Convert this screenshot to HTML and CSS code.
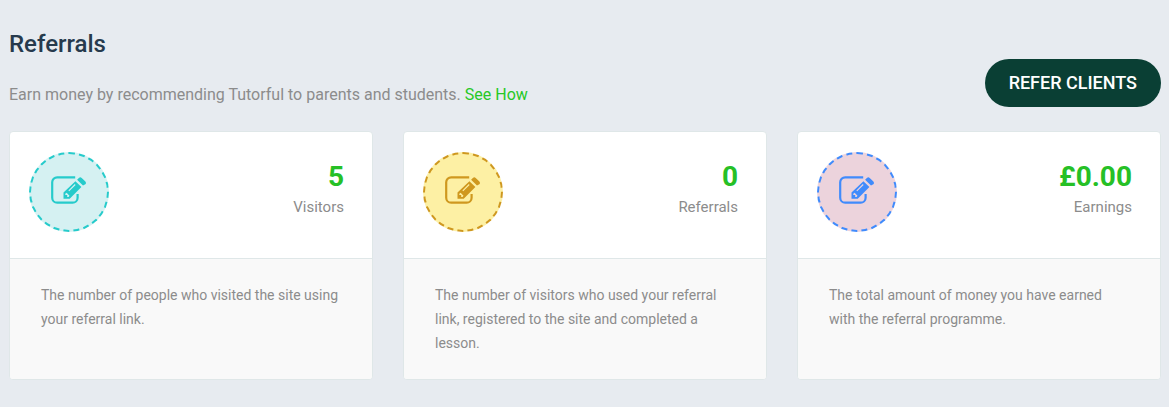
FILE: index.html
```html
<!DOCTYPE html>
<html lang="en">
<head>
    <meta charset="UTF-8">
    <meta name="viewport" content="width=device-width, initial-scale=1.0">
    <title>Referrals</title>
    <link rel="stylesheet" href="styles.css">
</head>
<body>
    <svg class="sprite" aria-hidden="true">
        <symbol id="edit" viewBox="0 0 36 32">
            <path d="M24.2 1.3H6.2a5 5 0 0 0-5 5v15.4a5 5 0 0 0 5 5h15.4a5 5 0 0 0 5-5V18" fill="none" stroke="currentColor" stroke-width="2.2"/>
            <path fill="currentColor" fill-rule="evenodd" d="M24.4 5.2l6 5.8-11.7 11.7h-6.2v-6.2zM14.3 17.7v1.4h1.9V21h1.4l.9-1.3-2.9-2.9zM17.4 14.5l.8.8 6.4-6.4-.8-.8z"/>
            <path fill="currentColor" d="M26.1 3.7l1.8-1.8a2 2 0 0 1 2.8 0l3.7 3.5a2 2 0 0 1 0 2.8l-2.4 1.4z"/>
        </symbol>
    </svg>
    <div class="page">
        <div class="header">
            <div class="intro">
                <h1>Referrals</h1>
                <p>Earn money by recommending Tutorful to parents and students. <a href="#">See How</a></p>
            </div>
            <button type="button" class="btn">REFER CLIENTS</button>
        </div>
        <div class="cards">
            <div class="card">
                <div class="top">
                    <div class="icon teal"><svg aria-hidden="true"><use href="#edit"/></svg></div>
                    <div class="stat">
                        <strong>5</strong>
                        <span>Visitors</span>
                    </div>
                </div>
                <p class="desc">The number of people who visited the site using your referral link.</p>
            </div>
            <div class="card">
                <div class="top">
                    <div class="icon yellow"><svg aria-hidden="true"><use href="#edit"/></svg></div>
                    <div class="stat">
                        <strong>0</strong>
                        <span>Referrals</span>
                    </div>
                </div>
                <p class="desc">The number of visitors who used your referral link, registered to the site and completed a lesson.</p>
            </div>
            <div class="card">
                <div class="top">
                    <div class="icon pink"><svg aria-hidden="true"><use href="#edit"/></svg></div>
                    <div class="stat">
                        <strong>£0.00</strong>
                        <span>Earnings</span>
                    </div>
                </div>
                <p class="desc">The total amount of money you have earned with the referral programme.</p>
            </div>
        </div>
    </div>
</body>
</html>
```
FILE: styles.css
```css
*{
    box-sizing: border-box;
}
body,h1,p{
    margin: 0;
}
body{
    background: #e7ebf0;
    color: #8c8c8c;
    font-family: Roboto, sans-serif;
    font-size: 16px;
    line-height: 24px;
}
.sprite{
    display: none;
}
.page{
    padding: 28px 8px 28px 9px;
}
.header{
    display: flex;
    justify-content: space-between;
    align-items: flex-end;
    margin-bottom: 24px;
}
h1{
    color: #263a4d;
    font-size: 24px;
    font-weight: 500;
    line-height: 32px;
    margin-bottom: 23px;
}
a{
    color: #26c826;
    text-decoration: none;
}
.btn{
    padding: 12px 24px;
    border: 0;
    border-radius: 24px;
    background: #0a3f34;
    color: #fff;
    font-family: inherit;
    font-size: 18px;
    font-weight: 500;
    line-height: 24px;
    cursor: pointer;
}
.cards{
    display: grid;
    grid-template-columns: repeat(3, 1fr);
    gap: 30px;
}
.card{
    display: flex;
    flex-direction: column;
    border: 1px solid #dfe7e8;
    border-radius: 4px;
    background: #fff;
    overflow: hidden;
}
.top{
    display: flex;
    justify-content: space-between;
    padding: 20px 28px 26px 19px;
    border-bottom: 1px solid #dfe7e8;
}
.icon{
    display: flex;
    align-items: center;
    justify-content: center;
    width: 80px;
    height: 80px;
    border: 2px dashed;
    border-radius: 50%;
}
.icon svg{
    width: 36px;
    height: 32px;
}
.teal{
    color: #26cbcb;
    background: #d5f1f2;
}
.yellow{
    color: #cf981f;
    background: #fdf0a4;
}
.pink{
    color: #408bfc;
    background: #ecd3dc;
}
.stat{
    padding-top: 8px;
    text-align: right;
}
.stat strong{
    display: block;
    color: #26c026;
    font-size: 28px;
    font-weight: 700;
    line-height: 34px;
}
.stat span{
    display: block;
    font-size: 15px;
    line-height: 26px;
}
.desc{
    flex: 1;
    padding: 24px 31px;
    background: #f9f9f9;
    font-size: 14px;
}
```
